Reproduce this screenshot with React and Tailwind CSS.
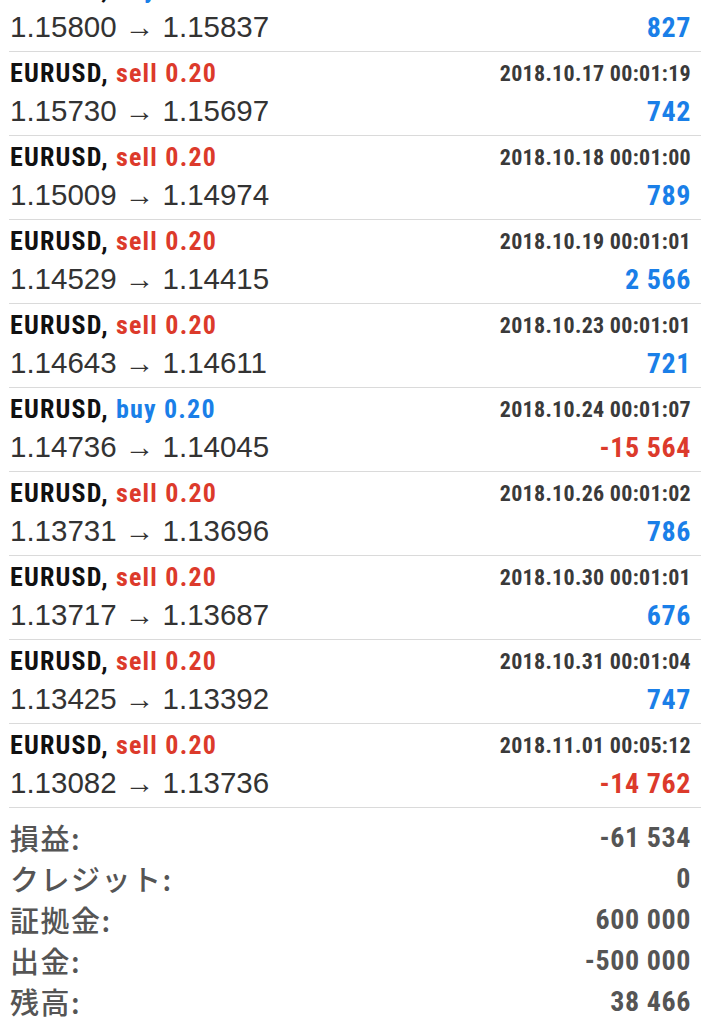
const deals = [
  { side: "buy", time: "2018.10.16 00:01:07", open: "1.15800", close: "1.15837", profit: "827" },
  { side: "sell", time: "2018.10.17 00:01:19", open: "1.15730", close: "1.15697", profit: "742" },
  { side: "sell", time: "2018.10.18 00:01:00", open: "1.15009", close: "1.14974", profit: "789" },
  { side: "sell", time: "2018.10.19 00:01:01", open: "1.14529", close: "1.14415", profit: "2 566" },
  { side: "sell", time: "2018.10.23 00:01:01", open: "1.14643", close: "1.14611", profit: "721" },
  { side: "buy", time: "2018.10.24 00:01:07", open: "1.14736", close: "1.14045", profit: "-15 564" },
  { side: "sell", time: "2018.10.26 00:01:02", open: "1.13731", close: "1.13696", profit: "786" },
  { side: "sell", time: "2018.10.30 00:01:01", open: "1.13717", close: "1.13687", profit: "676" },
  { side: "sell", time: "2018.10.31 00:01:04", open: "1.13425", close: "1.13392", profit: "747" },
  { side: "sell", time: "2018.11.01 00:05:12", open: "1.13082", close: "1.13736", profit: "-14 762" },
];

const totals = [
  ["損益:", "-61 534"],
  ["クレジット:", "0"],
  ["証拠金:", "600 000"],
  ["出金:", "-500 000"],
  ["残高:", "38 466"],
];

const cond = "font-[Roboto,sans-serif] [font-stretch:condensed] font-bold";

function DealRow({ deal }) {
  const sideColor = deal.side === "buy" ? "text-[#1a7fe8]" : "text-[#dc3a2b]";
  const loss = deal.profit.startsWith("-");
  return (
    <div className="ml-[9px] h-[84px] border-b border-[#dadada] pl-[1px] pr-[10px]">
      <div className="flex h-[42px] items-center justify-between">
        <span className={`${cond} text-[26px] tracking-[1.2px] text-[#111]`}>
          EURUSD, <span className={sideColor}>{deal.side} 0.20</span>
        </span>
        <span className={`${cond} text-[22px] tracking-[0.3px] text-[#3a3a3a]`}>{deal.time}</span>
      </div>
      <div className="flex h-[35px] items-center justify-between">
        <span className="font-['Liberation_Sans',Arial,sans-serif] text-[29.5px] text-[#333]">
          {deal.open} → {deal.close}
        </span>
        <span className={`${cond} text-[28px] tracking-[0.6px] ${loss ? "text-[#dc3a2b]" : "text-[#1a7fe8]"}`}>
          {deal.profit}
        </span>
      </div>
    </div>
  );
}

export default function App() {
  return (
    <div className="h-[1024px] overflow-hidden bg-white">
      <div className="-mt-[32px]">
        {deals.map((d, i) => (
          <DealRow key={i} deal={d} />
        ))}
      </div>
      <div className="pt-[9px] pl-[10px] pr-[10px]">
        {totals.map(([label, value]) => (
          <div key={label} className="flex h-[41px] items-center justify-between">
            <span className="font-['Noto_Sans_CJK_JP',sans-serif] text-[29px] font-medium tracking-[1.5px] text-[#555]">{label}</span>
            <span className={`${cond} text-[28px] tracking-[0.6px] text-[#555]`}>{value}</span>
          </div>
        ))}
      </div>
    </div>
  );
}
